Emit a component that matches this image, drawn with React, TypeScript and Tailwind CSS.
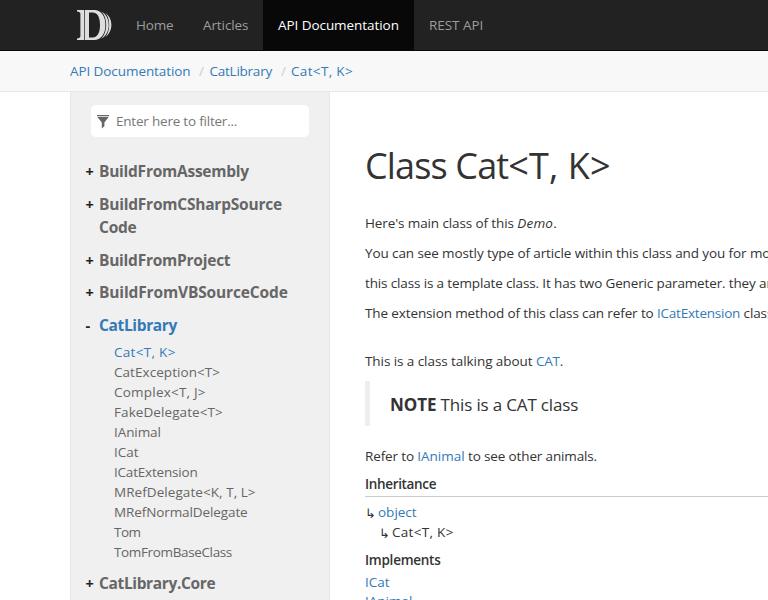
import type { ReactNode } from "react";

const groups = [
  { name: "BuildFromAssembly", track: "tracking-[-0.25px]" },
  { name: "BuildFromCSharpSource Code", track: "tracking-[-0.22px]" },
  { name: "BuildFromProject", track: "tracking-[-0.24px]" },
  { name: "BuildFromVBSourceCode", track: "tracking-[-0.14px]" },
];

const types = [
  { name: "Cat<T, K>", track: "tracking-[0.3px]", active: true },
  { name: "CatException<T>", track: "tracking-[0.06px]" },
  { name: "Complex<T, J>", track: "tracking-[0.22px]" },
  { name: "FakeDelegate<T>", track: "tracking-[0.08px]" },
  { name: "IAnimal", track: "tracking-[-0.08px]" },
  { name: "ICat", track: "tracking-[0px]" },
  { name: "ICatExtension", track: "tracking-[-0.2px]" },
  { name: "MRefDelegate<K, T, L>", track: "tracking-[0.06px]" },
  { name: "MRefNormalDelegate", track: "tracking-[-0.1px]" },
  { name: "Tom", track: "tracking-[-0.5px]" },
  { name: "TomFromBaseClass", track: "tracking-[-0.36px]" },
];

function Logo() {
  return (
    <svg width="36" height="32" viewBox="0 0 36 32" className="block" fill="#dedede">
      <path d="M1 1H8.3V31H1V29.6Q4.4 29.2 4.4 27V5Q4.4 2.8 1 2.4Z" />
      <path
        fillRule="evenodd"
        d="M9 1H19C26 1.6 29.4 8 29.4 16S26 30.4 19 31H9ZM13 3.6V28.4H16.5C22 28.4 24 23 24 16S22 3.6 16.5 3.6Z"
      />
      <path d="M25.6 2.4C30.4 5.3 32.7 10.5 32.7 16S30.4 26.7 25.6 29.6C28.6 26 30.2 21.5 30.2 16S28.6 6 25.6 2.4Z" />
      <path d="M29.3 3.8C33.2 6.8 35.4 11 35.4 16S33.2 25.2 29.3 28.2C32 24.8 33.2 20.8 33.2 16S32 7.2 29.3 3.8Z" />
    </svg>
  );
}

function FilterIcon() {
  return (
    <svg width="12" height="14" viewBox="0 0 12 14" fill="#666" className="mt-[2px]">
      <path d="M0 0H12V1.2H0ZM0.4 2H11.6L7.4 7.6V11.2L4.8 13.6V7.6Z" />
    </svg>
  );
}

function Link({ children, track = "" }: { children: ReactNode; track?: string }) {
  return (
    <a href="#" className={`text-[#337ab7] ${track}`}>
      {children}
    </a>
  );
}

function Group({ name, track, open = false }: { name: string; track: string; open?: boolean }) {
  return (
    <div className="flex text-[15.5px] leading-[22.8px] font-bold">
      <span className="-mb-px w-[14px] shrink-0 pt-px pl-[0.5px] text-[14.5px] text-[#222]">{open ? "-" : "+"}</span>
      <a href="#" className={`${track} ${open ? "text-[#337ab7]" : "text-[#666]"}`}>
        {name}
      </a>
    </div>
  );
}

function Arrow() {
  return <span className="-mb-px w-[13px] pt-px text-[13px]">↳</span>;
}

export default function App() {
  return (
    <div className="flex h-[600px] w-[768px] flex-col overflow-hidden bg-white font-['Open_Sans',sans-serif] text-[13.5px] leading-5 text-[#333]">
      <header className="flex h-[51px] shrink-0 border-b border-[#080808] bg-[#222] pl-[76px] leading-[50px] text-[#9d9d9d]">
        <div className="w-[45px] pt-[9px]">
          <Logo />
        </div>
        <a href="#" className="w-[67px] pl-[15px] tracking-[-0.22px]">Home</a>
        <a href="#" className="w-[75px] pl-[15px] tracking-[-0.09px]">Articles</a>
        <a href="#" className="w-[151px] bg-[#080808] pl-[15px] tracking-[-0.06px] text-white">API Documentation</a>
        <a href="#" className="pl-[15px] tracking-[-0.04px]">REST API</a>
      </header>

      <nav className="flex h-[41px] shrink-0 border-b border-[#e7e7e7] bg-[#f8f8f8] pl-[70px] leading-10">
        <div className="w-[129px]"><Link track="tracking-[-0.08px]">API Documentation</Link></div>
        <span className="w-[10.5px] text-[#ccc]">/</span>
        <div className="w-[71.5px]"><Link track="tracking-[-0.24px]">CatLibrary</Link></div>
        <span className="w-[10px] text-[#ccc]">/</span>
        <Link track="tracking-[0.34px]">Cat&lt;T, K&gt;</Link>
      </nav>

      <div className="flex min-h-0 flex-1 pl-[70px]">
        <aside className="w-[260px] shrink-0 border-x border-[#e7e7e7] bg-[#f0f0f0] pt-[13px] pl-[14px]">
          <div className="ml-[6px] flex h-8 w-[218px] items-center rounded-[5px] bg-white pl-[6px]">
            <FilterIcon />
            <span className="ml-[7px] tracking-[-0.21px] text-[#777]">Enter here to filter...</span>
          </div>
          <div className="flex flex-col gap-[10px] pt-[23.3px] pr-[30px]">
            {groups.map((g) => (
              <Group key={g.name} name={g.name} track={g.track} />
            ))}
            <div>
              <Group name="CatLibrary" track="tracking-[-0.35px]" open />
              <ul className="pt-[5px] pl-[29px]">
                {types.map((t) => (
                  <li key={t.name} className={`whitespace-nowrap ${t.track} ${t.active ? "text-[#337ab7]" : "text-[#666]"}`}>
                    {t.name}
                  </li>
                ))}
              </ul>
            </div>
            <Group name="CatLibrary.Core" track="tracking-[-0.36px]" />
          </div>
        </aside>

        <main className="min-w-0 flex-1 overflow-hidden pl-[35px] whitespace-nowrap">
          <h1 className="mt-[54px] h-10 text-[36px] leading-10 font-normal tracking-[-0.85px]">
            Class Cat<span className="tracking-[0.1px]">&lt;T, K&gt;</span>
          </h1>
          <div className="mt-[22px] leading-[30px]">
            <p className="tracking-[-0.11px]">
              Here's main class of this <em className="tracking-[0.2px]">Demo</em>.
            </p>
            <p className="tracking-[-0.1px]">You can see mostly type of article within this class and you for more</p>
            <p className="tracking-[-0.14px]">this class is a template class. It has two Generic parameter. they are</p>
            <p className="tracking-[-0.12px]">
              The extension method of this class can refer to <Link track="tracking-[-0.22px]">ICatExtension</Link> class
            </p>
          </div>
          <p className="mt-[18px] leading-[30px] tracking-[-0.07px]">
            This is a class talking about <Link track="tracking-[-0.25px]">CAT</Link>.
          </p>
          <blockquote className="mt-[5px] h-[45px] border-l-[5px] border-[#eee] pl-5 text-[17px] leading-[47px] tracking-[-0.16px]">
            <strong className="tracking-[-0.1px]">NOTE</strong> This is a CAT class
          </blockquote>
          <p className="mt-[15px] leading-[30px] tracking-[-0.14px]">
            Refer to <Link track="tracking-[0px]">IAnimal</Link> to see other animals.
          </p>
          <h5 className="mt-[3px] border-b border-[#ccc] pb-[2px] font-semibold tracking-[-0.34px]">Inheritance</h5>
          <div className="mt-[5px] flex">
            <Arrow />
            <Link>object</Link>
          </div>
          <div className="flex pl-[14px]">
            <Arrow />
            <span className="tracking-[0.3px]">Cat&lt;T, K&gt;</span>
          </div>
          <h5 className="mt-2 font-semibold tracking-[-0.26px]">Implements</h5>
          <div className="mt-[2px]"><Link>ICat</Link></div>
          <div className="-mt-px"><Link>IAnimal</Link></div>
        </main>
      </div>
    </div>
  );
}
